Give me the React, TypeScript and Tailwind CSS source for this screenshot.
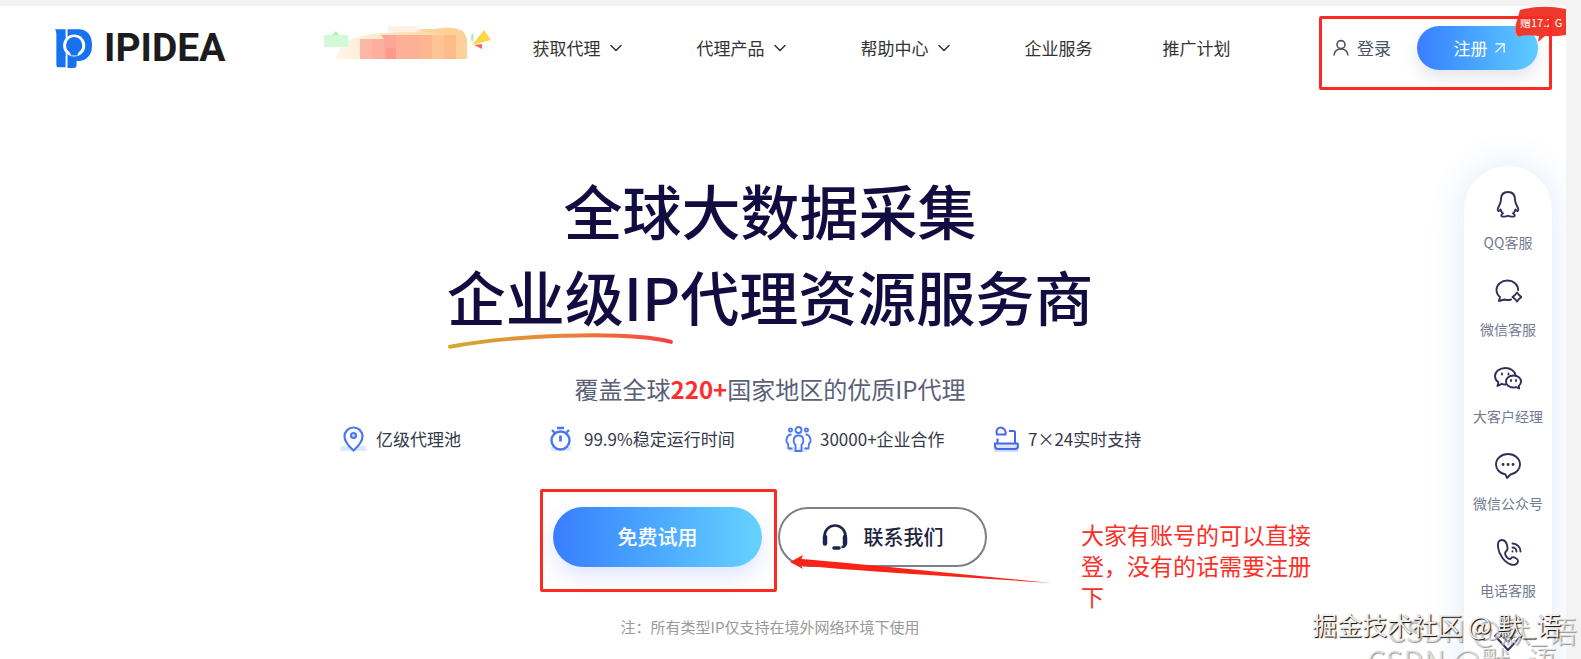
import type { ReactNode } from "react";
import { ArrowUpRight, ChevronDown } from "lucide-react";

const navItems = [
  { label: "获取代理", menu: true },
  { label: "代理产品", menu: true },
  { label: "帮助中心", menu: true },
  { label: "企业服务", menu: false },
  { label: "推广计划", menu: false },
];

export default function App() {
  return (
    <div className="relative min-h-screen overflow-hidden bg-[#f3f3f3] pt-1.5 pr-[15px] font-['Noto_Sans_CJK_SC',sans-serif]">
      <div className="relative min-h-screen overflow-hidden bg-white">
        <Header />
        <Hero />
        <ServiceBar />
      </div>
      <Watermarks />
    </div>
  );
}

const Header = () => (
  <header className="flex h-[84px] items-center pr-7 pl-[55px]">
    <a href="#" className="flex items-center gap-3">
      <LogoMark />
      <span className="font-['Roboto',sans-serif] text-[39px] leading-10 font-bold text-[#1c1c1e]">
        IPIDEA
      </span>
    </a>
    <a href="#promo" aria-label="promo" className="ml-[99px] shrink-0">
      <PromoBanner />
    </a>
    <nav className="ml-10 flex shrink-0 gap-[70px]">
      {navItems.map((item) => (
        <a
          key={item.label}
          href="#"
          className="flex items-center gap-1.5 text-[17px] leading-6 text-[#333]"
        >
          {item.label}
          {item.menu && <ChevronDown className="h-5 w-5" strokeWidth={1.8} />}
        </a>
      ))}
    </nav>
    <div className="relative ml-auto flex shrink-0 items-center gap-[26px]">
      <a
        href="#login"
        className="flex items-center gap-2 text-[17px] leading-6 text-[#4c5166]"
      >
        <svg viewBox="0 0 16 18" className="h-[18px] w-4" fill="none" stroke="currentColor" strokeWidth="1.6">
          <circle cx="8" cy="5.6" r="4" />
          <path d="M1 16.5c.4-4 3.200-6.500 7-6.500s6.600 2.500 7 6.500" />
        </svg>
        登录
      </a>
      <button className="flex h-11 w-[121px] items-center justify-center gap-0.5 rounded-full bg-linear-to-r from-[#3a7eff] to-[#5fcbff] pl-2 text-[17px] text-white shadow-[0_8px_16px_rgba(60,80,120,0.14)]">
        注册
        <ArrowUpRight className="h-5 w-5" strokeWidth={1.5} />
      </button>
      <GiftBadge />
      <div className="pointer-events-none absolute -inset-x-3.5 -top-2.5 -bottom-5 rounded-xs border-3 border-[#fb2b24]" />
    </div>
  </header>
);

const GiftBadge = () => (
  <div className="absolute -top-5 -right-7 h-9 w-[52px]">
    <svg viewBox="0 0 52 36" className="absolute inset-0 h-full w-full">
      <path
        d="M6 4Q28-2 52 3V29Q40 31 31 30L24 36 25 30Q12 28 4 31Q0 27 2 18Z"
        fill="#f0392d"
      />
      <path d="M2 18Q-1 28 5 31" fill="none" stroke="#fb8a80" />
    </svg>
    <span className="relative block pt-2 pl-1.5 text-[11px] leading-4 whitespace-nowrap text-white">
      赠17.2 G
    </span>
  </div>
);

const Hero = () => (
  <main className="flex flex-col items-center pt-[77px] pr-[26px]">
    <h1 className="text-center text-[59px] leading-[86px] font-medium text-[#120c40]">
      全球大数据采集
      <br />
      <span className="relative inline-block">
        企业级IP
        <svg
          viewBox="0 0 230 18"
          className="absolute top-20 left-0 w-[227px]"
          fill="none"
        >
          <defs>
            <linearGradient id="stroke">
              <stop offset="0" stopColor="#cfaa2e" />
              <stop offset="0.5" stopColor="#ea853c" />
              <stop offset="1" stopColor="#f8403f" />
            </linearGradient>
          </defs>
          <path
            d="M3 14C60 3 180-3 227 9"
            stroke="url(#stroke)"
            strokeWidth="4"
            strokeLinecap="round"
          />
        </svg>
      </span>
      代理资源服务商
    </h1>
    <p className="mt-8 text-2xl leading-9 text-[#5b5f78]">
      覆盖全球<b className="font-bold text-[#fb2f2f]">220+</b>国家地区的优质IP代理
    </p>
    <ul className="mt-[18px] grid w-full max-w-[860px] grid-cols-[208px_236px_208px_1fr] text-[17px] leading-7 text-[#35394a]">
      <Feature icon={<PinIcon />}>亿级代理池</Feature>
      <Feature icon={<TimerIcon />}>99.9%稳定运行时间</Feature>
      <Feature icon={<PeopleIcon />}>30000+企业合作</Feature>
      <Feature icon={<SupportIcon />}>7×24实时支持</Feature>
    </ul>
    <div className="relative mt-[54px] flex gap-4">
      <button className="h-[60px] w-[209px] rounded-full bg-linear-to-r from-[#3a7dff] to-[#66d2ff] text-xl font-medium text-white shadow-[0_10px_20px_rgba(60,90,255,0.15)]">
        免费试用
      </button>
      <button className="flex h-[60px] w-[209px] items-center justify-center gap-4 rounded-full border-2 border-[#7b8089] text-xl font-medium text-[#1f2440]">
        <HeadsetIcon />
        联系我们
      </button>
      <div className="pointer-events-none absolute top-[-18px] left-[-13px] h-[103px] w-[237px] rounded-xs border-3 border-[#fb2b24]" />
      <svg
        viewBox="0 0 264 30"
        className="pointer-events-none absolute top-[47px] left-[236px] w-[264px]"
        fill="#fb2318"
      >
        <path d="M1 8 14 1 12.500 5Q50 8 110 14L262 29 108 19Q50 15 12 11.500L14 15Z" />
      </svg>
      <p className="absolute top-3 left-[528px] w-[232px] text-[23px] leading-[31px] text-[#fb2f28]">
        大家有账号的可以直接登，没有的话需要注册下
      </p>
    </div>
    <p className="mt-12 text-[15px] leading-6 text-[#999]">
      注：所有类型IP仅支持在境外网络环境下使用
    </p>
  </main>
);

const Feature = ({ icon, children }: { icon: ReactNode; children: ReactNode }) => (
  <li className="flex items-center gap-2 whitespace-nowrap">
    {icon}
    {children}
  </li>
);

const ServiceBar = () => (
  <aside className="absolute top-40 right-3.5 flex w-[88px] flex-col items-center rounded-full bg-white pt-5 pb-20 text-sm text-[#737b90] shadow-[0_0_36px_rgba(60,120,220,0.16)]">
    <Service label="QQ客服">
      <path d="M14 2c-4.500 0-7 3-7 7.500 0 2.500-.6 4-2 6.500-1.200 2.200-1.500 4.500-.6 5 .8.300 1.600-.6 2.200-1.500.4 1.700 1.200 3 2.400 4-1.200.6-1.800 1.200-1.800 2 0 1.500 4.800 1.500 6.800.2 2 1.300 6.800 1.300 6.800-.2 0-.8-.6-1.400-1.800-2 1.200-1 2-2.300 2.400-4 .6.900 1.400 1.800 2.200 1.500.9-.5.600-2.800-.6-5-1.400-2.500-2-4-2-6.500C21 5 18.500 2 14 2Z" />
    </Service>
    <Service label="微信客服">
      <path d="M17 22.500c-2 .7-4.500.7-6.500 0L5 24l1-4C3.500 18 2.500 15.500 2.500 13 2.500 7.500 7.500 3.500 13.500 3.500S24 7.500 24.200 13" />
      <path d="M23 15.500 25 18l2.500 2-2.500 2-2 2.500-2-2.500-2.500-2 2.500-2Z" />
    </Service>
    <Service label="大客户经理">
      <path d="M12 20.500c-1.500.1-3-.1-4.300-.6L3.500 22l.9-3.700C2 16.600 1 14.500 1 12.200 1 7.500 5.700 4 11.500 4c5 0 9.200 3 10 7" />
      <path d="M19.500 11.500c4.400 0 7.500 2.600 7.500 6 0 1.700-.8 3.300-2.300 4.400l.5 2.600-3-1.300c-.8.200-1.700.3-2.700.3-4.400 0-7.500-2.600-7.500-6s3.100-6 7.500-6Z" />
      <path d="M8 9.500v1M14.500 9.500v1M17 16v1M22 16v1" />
    </Service>
    <Service label="微信公众号">
      <path d="M14 3C7.500 3 2 7.500 2 13.500c0 5 4 9 9.500 10L13 27l3.500-3.500C22 22.500 26 18.500 26 13.500 26 7.500 20.500 3 14 3Z" />
      <path d="M9 13.500h.1M14 13.500h.1M19 13.500h.1" strokeWidth="2.800" />
    </Service>
    <Service label="电话客服">
      <path d="M8 2C5 2 3.500 4.500 4 9c.8 7.500 6.500 15.500 13 17.500 3.500 1 6.500-.5 7-3 .3-1.500-.6-2.500-2.500-3.500-2.500-1.300-3.300-1.300-4.500.3-1 1.200-2.500.8-4-1-1.700-2-2.300-4-1.500-5.300 1-1.500 2.500-1.500 2-4.500C13 6 11.500 2 8 2Z" />
      <path d="M18.500 5.500c4.500 0 8 3.500 8 8M18.500 9.500c2.200 0 4 1.800 4 4M18.500 13.300v.2" />
    </Service>
    <Service label="">
      <path d="M7 4h14l6 7-13 14L1 11Z" />
      <path d="m8 11 6 6 6-6" />
    </Service>
  </aside>
);

const Service = ({ label, children }: { label: string; children: ReactNode }) => (
  <a href="#service" className="flex h-[87px] flex-col items-center gap-3.5 pt-1">
    <svg
      viewBox="0 0 28 28"
      className="h-7 w-7"
      fill="none"
      stroke="#332d59"
      strokeWidth="1.9"
      strokeLinejoin="round"
      strokeLinecap="round"
    >
      {children}
    </svg>
    <span className="leading-5">{label}</span>
  </a>
);

const Watermarks = () => (
  <div className="pointer-events-none whitespace-nowrap">
    <p className="absolute right-1 bottom-3.5 text-[30px] leading-11 text-white/60 [text-shadow:1px_1px_1px_#999]">
      CSDN @默_语
    </p>
    <p className="absolute right-6 -bottom-4 text-[30px] leading-11 text-white/60 [text-shadow:1px_1px_1px_#999]">
      CSDN @默_语
    </p>
    <p className="absolute right-5 bottom-[23px] text-[25px] leading-9 text-[#eee] [text-shadow:1px_1px_1px_#000]">
      掘金技术社区 @ 默_语
    </p>
  </div>
);

const LogoMark = () => (
  <svg viewBox="0 0 110 116" className="h-[39px] w-[37px]">
    <path d="M0 1H32V114H10Q4 114 4 106V14Q4 6 0 1Z" fill="#1672ee" />
    <path
      d="M37 1H74Q110 6 110 48Q110 90 72 95H64V108Q64 116 56 116H37Z"
      fill="#1672ee"
    />
    <circle cx="57" cy="49" r="33" fill="#fff" />
    <path
      d="M57 24a25 25 0 0 0-15 44q5 4 5 11h20q0-7 5-11A25 25 0 0 0 57 24Z"
      fill="#1672ee"
    />
    <path d="M34 0v22M34 80v36" stroke="#fff" strokeWidth="4" />
  </svg>
);

const PromoBanner = () => (
  <svg viewBox="0 0 168 54" className="h-[54px] w-[168px]">
    <defs>
      <linearGradient id="promo">
        <stop offset="0" stopColor="#fff6ea" />
        <stop offset="1" stopColor="#ffcf94" />
      </linearGradient>
    </defs>
    <path d="M12 38Q14 14 60 12L110 8Q143 2 143 22V38Z" fill="url(#promo)" />
    <path d="M64 5h29v6H64Z" fill="#fff1e6" />
    <path d="M93 8h38q12 0 12 15v15h-18V16Z" fill="#fed09a" />
    <path d="M0 14h24v12H0Z" fill="#d3fad8" />
    <path d="m8 14 4-4 3 4Z" fill="#b3efbb" />
    <path d="M36 18h12v20H36Z" fill="#fdb7a6" />
    <path d="M48 18h12v20H48Z" fill="#fdaf9f" />
    <path d="M57 14h15v24H60V18Z" fill="#fba698" />
    <path d="M72 14h24v24H72Z" fill="#fcb095" />
    <path d="M62 27h10v11H62Z" fill="#fb998c" />
    <path d="M96 14h12v24H96Z" fill="#fdb58f" />
    <path d="M108 14h12v24h-12Z" fill="#fdc596" />
    <path d="M120 14h12v24h-12Z" fill="#fdbc88" />
    <path d="m148 24 12-15 7 10Z" fill="#fbd745" />
    <path d="m147 14 3-2-1 9-2-2Z" fill="#b5ecb9" />
    <path d="m150 24 8-1v5Z" fill="#f6685b" />
  </svg>
);

const PinIcon = () => (
  <svg viewBox="0 0 28 28" className="h-7 w-7" fill="none" stroke="#4a76f0" strokeWidth="2.200">
    <path d="M1 21h24l2 5H0Z" fill="#dbe9fc" stroke="none" />
    <path
      d="M13.500 25.500C9 21.500 4.500 17 4.500 11.500a9 9 0 0 1 18 0c0 5.500-4.500 10-9 14Z"
      fill="#fff"
    />
    <circle cx="13.500" cy="10.500" r="2.500" fill="#cfe0ff" />
  </svg>
);

const TimerIcon = () => (
  <svg viewBox="0 0 28 28" className="h-7 w-7" fill="none" stroke="#4a76f0" strokeWidth="2.400">
    <path d="M3 22h20v4H3Z" fill="#dbe9fc" stroke="none" />
    <circle cx="12.500" cy="15.500" r="9" fill="#fff" />
    <path d="M9 3h7M4 5l3 3M21 5l-3 3" />
    <path d="M12.500 10.500v6" strokeWidth="2.800" />
  </svg>
);

const PeopleIcon = () => (
  <svg viewBox="0 0 28 28" className="h-7 w-7" fill="none" stroke="#4a76f0" strokeWidth="1.800">
    <path d="M5 22h18v5H5Z" fill="#e0ecff" stroke="none" />
    <circle cx="14.500" cy="5" r="3" />
    <circle cx="6.500" cy="5" r="1.600" />
    <circle cx="22.500" cy="5" r="1.600" />
    <path d="M14.500 10.500c-3.500 0-4.800 2-4.800 5 0 2 .6 3.500 1.800 4v6.500h6v-6.500c1.200-.5 1.800-2 1.800-4 0-3-1.300-5-4.800-5Z" />
    <path d="M7.500 9.500c-3.500 0-4.500 2-5 5-.3 2 .2 3.500 1.500 4l.5 5h4M21.500 9.500c3.500 0 4.500 2 5 5 .3 2-.2 3.500-1.500 4l-.5 5h-4" />
  </svg>
);

const SupportIcon = () => (
  <svg viewBox="0 0 28 28" className="h-7 w-7" fill="none" stroke="#4a66e8" strokeWidth="2">
    <path d="M2 22h24v5H2Z" fill="#cfe0ff" stroke="none" />
    <path d="M5 9.500h8.500c1-4-2-7-5-7s-5 3-3.500 7Z" />
    <path d="M17 6h4.500q1.500 0 1.500 1.500V18M5.500 13.500V18" />
    <path d="M3 18.500h22.500l.5 2.500q0 3-3 3H6q-3 0-3-3Z" fill="#d9e6ff" />
  </svg>
);

const HeadsetIcon = () => (
  <svg viewBox="0 0 26 28" className="h-7 w-[26px]" fill="none" stroke="#20244a" strokeWidth="2.600">
    <path d="M2.500 16v-3a10.500 10.500 0 0 1 21 0v7q0 4-4 4" />
    <path d="M3 14v6.500M23 14v6.500" strokeWidth="4.500" strokeLinecap="round" />
    <path d="M12 25h5" strokeWidth="3.600" strokeLinecap="round" />
  </svg>
);
